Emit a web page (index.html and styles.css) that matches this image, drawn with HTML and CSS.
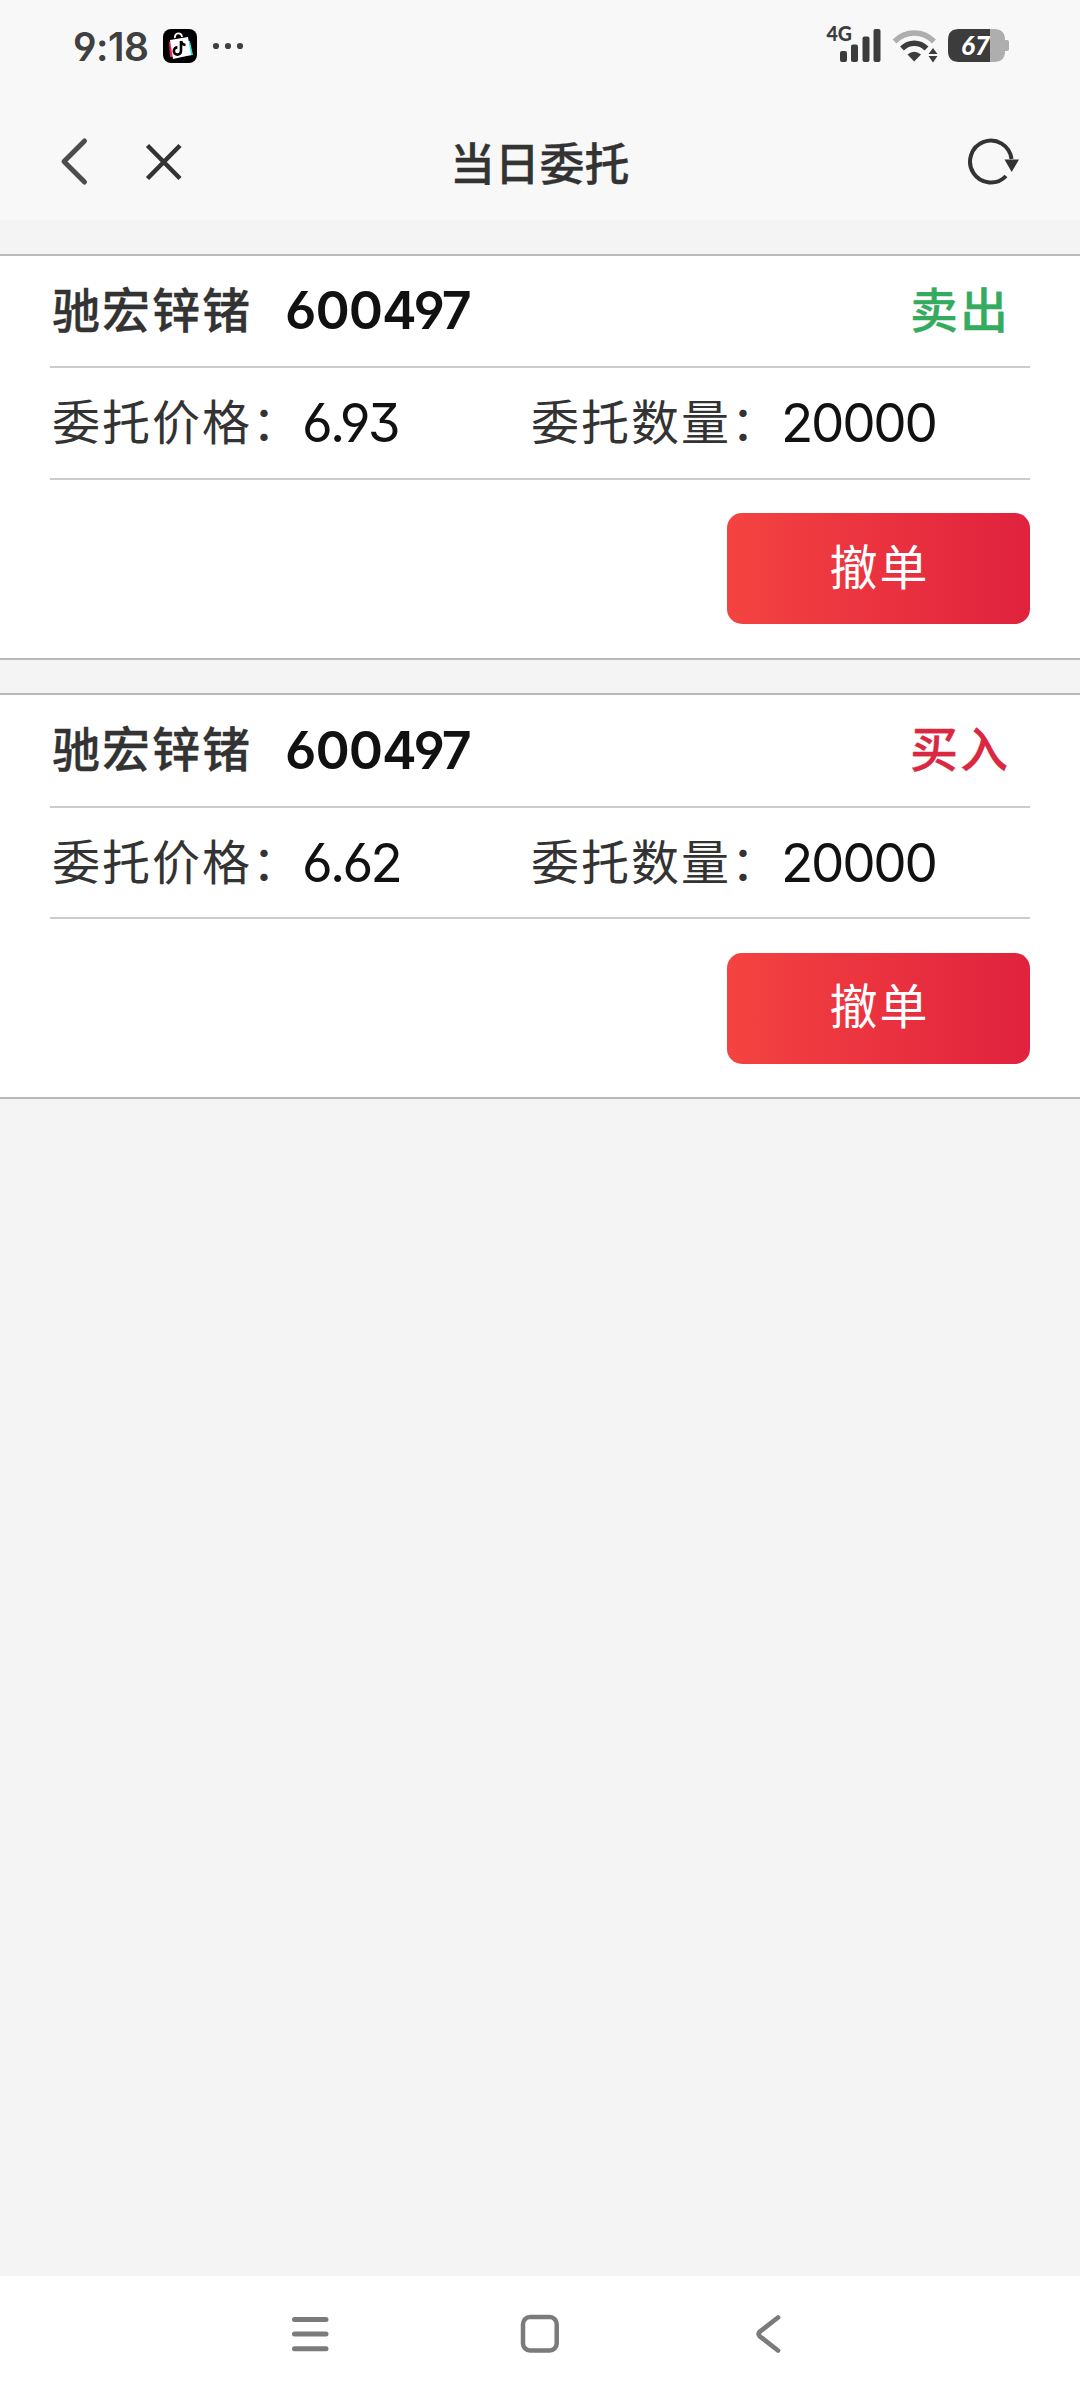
FILE: index.html
```html
<!DOCTYPE html>
<html lang="zh-CN">
<head>
    <meta charset="UTF-8">
    <meta name="viewport" content="width=device-width, initial-scale=1.0">
    <title>当日委托</title>
    <link rel="stylesheet" href="styles.css">
</head>
<body>
    <div class="status-bar">
        <span class="time">9:18</span>
        <svg class="app-icon" width="34" height="34" viewBox="0 0 34 34">
            <rect width="34" height="34" rx="8" fill="#000"/>
            <path d="M6 13L20 9L25 27L7 28Z" fill="#f5205a"/>
            <path d="M12 11L27 12L30 26L13 28Z" fill="#2ce5e2"/>
            <path d="M7 11L25 8L28 26L10 30Z" fill="#fff"/>
            <path d="M12 9C11 3 19 3 19 8" fill="none" stroke="#fff" stroke-width="1.8"/>
            <path d="M18 12V22a3.6 3.6 0 1 1-3.6-3.6M18 12c.5 2.500 2 3.800 4.500 4" fill="none" stroke="#000" stroke-width="2.600"/>
        </svg>
        <svg class="dots" width="32" height="8" viewBox="0 0 32 8" fill="#404040">
            <circle cx="4" cy="4" r="3.100"/>
            <circle cx="16" cy="4" r="3.100"/>
            <circle cx="28" cy="4" r="3.100"/>
        </svg>
        <svg class="signals" width="190" height="40" viewBox="0 0 190 40">
            <text class="net" x="0.500" y="15" textLength="25.500" lengthAdjust="spacingAndGlyphs">4G</text>
            <g fill="#3c3c3c">
                <rect x="14" y="25" width="7" height="11" rx="2"/>
                <rect x="25" y="18.500" width="7" height="17.500" rx="2"/>
                <rect x="36.500" y="10.500" width="7" height="25.500" rx="2"/>
                <rect x="47.500" y="3" width="7" height="33" rx="2"/>
            </g>
            <path d="M68.500 15.500C79.500 4.200 97 4.200 108 15.500" fill="none" stroke="#aeaeae" stroke-width="5.500"/>
            <path d="M76 22.500C83 15.500 93.500 15.500 100.500 22.500" fill="none" stroke="#3c3c3c" stroke-width="5.500"/>
            <path d="M81.500 28.500Q88.200 22.800 95 28.500L88.200 35.500Z" fill="#3c3c3c"/>
            <path d="M107 22L111.500 28H102.500ZM102.500 30H111.500L107 36.500Z" fill="#3c3c3c"/>
            <path d="M164 3H168Q179 3 179 14V25Q179 36 168 36H164Z" fill="#aeaeae"/>
            <rect x="177" y="14" width="6" height="11" rx="2" fill="#aeaeae"/>
            <path d="M164 3H133Q122 3 122 14V25Q122 36 133 36H164Z" fill="#3c3c3c"/>
            <text class="level" x="135" y="29" textLength="29" lengthAdjust="spacingAndGlyphs">67</text>
        </svg>
    </div>

    <header class="title-bar">
        <svg class="back" width="30" height="50" viewBox="0 0 30 50" fill="none">
            <path d="M24.500 5L4 25.500L24.500 46" stroke="#4c4c4c" stroke-width="5" stroke-linecap="round" stroke-linejoin="round"/>
        </svg>
        <svg class="close" width="40" height="40" viewBox="0 0 40 40" fill="none">
            <path d="M3.500 3.500L36 36.500M36 3.500L3.500 36.500" stroke="#333" stroke-width="4.500"/>
        </svg>
        <h1>当日委托</h1>
        <svg class="refresh" width="56" height="50" viewBox="0 0 56 50">
            <path d="M41 39A20.800 21 0 1 1 46.500 22" fill="none" stroke="#333" stroke-width="4"/>
            <path d="M39.500 22.500H54L46.700 35Z" fill="#333"/>
        </svg>
    </header>

    <main class="orders">
        <section class="order">
            <div class="row stock">
                <span class="name">驰宏锌锗</span>
                <span class="num code">600497</span>
                <span class="side sell">卖出</span>
            </div>
            <div class="row detail">
                <div class="field"><span class="label">委托价格：</span><span class="num price">6.93</span></div>
                <div class="field"><span class="label">委托数量：</span><span class="num">20000</span></div>
            </div>
            <div class="actions">
                <button class="cancel">撤单</button>
            </div>
        </section>

        <section class="order">
            <div class="row stock">
                <span class="name">驰宏锌锗</span>
                <span class="num code">600497</span>
                <span class="side buy">买入</span>
            </div>
            <div class="row detail">
                <div class="field"><span class="label">委托价格：</span><span class="num price">6.62</span></div>
                <div class="field"><span class="label">委托数量：</span><span class="num">20000</span></div>
            </div>
            <div class="actions">
                <button class="cancel">撤单</button>
            </div>
        </section>
    </main>

    <nav class="nav-bar">
        <svg width="40" height="44" viewBox="0 0 40 44" fill="none" stroke="#7b7b7b" stroke-width="5" stroke-linecap="round">
            <path d="M4.500 7.500H36M4.500 22H36M4.500 36.700H36"/>
        </svg>
        <svg width="40" height="44" viewBox="0 0 40 44" fill="none" stroke="#7b7b7b" stroke-width="4.500">
            <rect x="3" y="5" width="33.700" height="33.500" rx="7"/>
        </svg>
        <svg width="40" height="44" viewBox="0 0 40 44" fill="none" stroke="#7b7b7b" stroke-width="4.700" stroke-linecap="round">
            <path d="M28 5.500L10 19.500Q7.500 22 10 24.500L28 38.500"/>
        </svg>
    </nav>
</body>
</html>
```
FILE: styles.css
```css
* {
    box-sizing: border-box;
}
body {
    margin: 0;
    height: 2400px;
    display: flex;
    flex-direction: column;
    background-color: #f4f4f4;
    color: #333;
    font-family: "Noto Sans CJK SC", sans-serif;
}

/* status bar */
.status-bar {
    height: 92px;
    padding: 0 64px 0 73px;
    display: flex;
    align-items: center;
    background-color: #f8f8f8;
}
.time {
    width: 90px;
    font-family: Inter, sans-serif;
    font-size: 39px;
    font-weight: 600;
    letter-spacing: -0.5px;
    font-feature-settings: "cv03", "cv04";
    color: #404040;
}
.dots {
    margin-left: 15px;
}
.signals {
    margin-left: auto;
    overflow: visible;
}
.net {
    font-family: Lato, sans-serif;
    font-size: 20px;
    font-weight: 900;
    fill: #3c3c3c;
}
.level {
    font-family: Lato, sans-serif;
    font-size: 27px;
    font-weight: 900;
    font-style: italic;
    fill: #fff;
}

/* title bar */
.title-bar {
    height: 128px;
    padding: 12px 59px 0 60px;
    display: grid;
    grid-template-columns: 84px 300px 1fr 56px;
    align-items: start;
    background-color: #f8f8f8;
}
.back {
    margin-top: 32px;
}
.refresh {
    margin-top: 33px;
}
.close {
    margin-top: 38px;
}
.title-bar h1 {
    margin: 28px 0 0 6px;
    font-size: 45px;
    line-height: 60px;
    font-weight: 500;
    letter-spacing: -0.2px;
    -webkit-text-stroke: 0.3px;
}

/* orders */
.orders {
    flex: 1;
    padding-top: 34px;
}
.order {
    margin-bottom: 33.3px;
    padding: 0 50px;
    background-color: #fff;
    border-top: 2px solid #b9b9b9;
    border-bottom: 2px solid #b9b9b9;
}
.row {
    display: flex;
    align-items: center;
    padding: 0 20px 0 2px;
    border-bottom: 2px solid #ccc;
    font-size: 48px;
    line-height: 70px;
    letter-spacing: 2px;
}
.stock {
    height: 112.3px;
    font-weight: 500;
}
.detail {
    height: 111.8px;
}
.name, .side, .label {
    margin-top: -8px;
}
.name, .side {
    margin-top: -9px;
    -webkit-text-stroke: 0.3px;
}
.name {
    width: 233px;
}
.num {
    color: #111;
    font-family: Inter, sans-serif;
    font-size: 53px;
    letter-spacing: -2.3px;
    font-feature-settings: "cv03", "cv04", "cv09";
}
.price {
    letter-spacing: -2.8px;
}
.code {
    font-size: 52px;
    font-weight: 600;
    letter-spacing: -1px;
}
.side {
    margin-left: auto;
}
.sell {
    color: #34ab5e;
}
.buy {
    color: #d9283f;
}
.field {
    width: 480px;
    display: flex;
    align-items: center;
}
.label {
    width: 250px;
}
.actions {
    height: 178px;
    padding-top: 33.3px;
    display: flex;
    justify-content: flex-end;
    align-items: flex-start;
}
.cancel {
    width: 303px;
    height: 111px;
    padding: 0 0 10px 2px;
    border: none;
    border-radius: 15px;
    background: linear-gradient(to right, #f44340, #e0223e);
    color: #fff;
    font-family: inherit;
    font-size: 48px;
    letter-spacing: 2px;
}

/* navigation bar */
.nav-bar {
    height: 124px;
    padding: 36px 290px 0;
    display: flex;
    justify-content: space-between;
    background-color: #fff;
}
```
